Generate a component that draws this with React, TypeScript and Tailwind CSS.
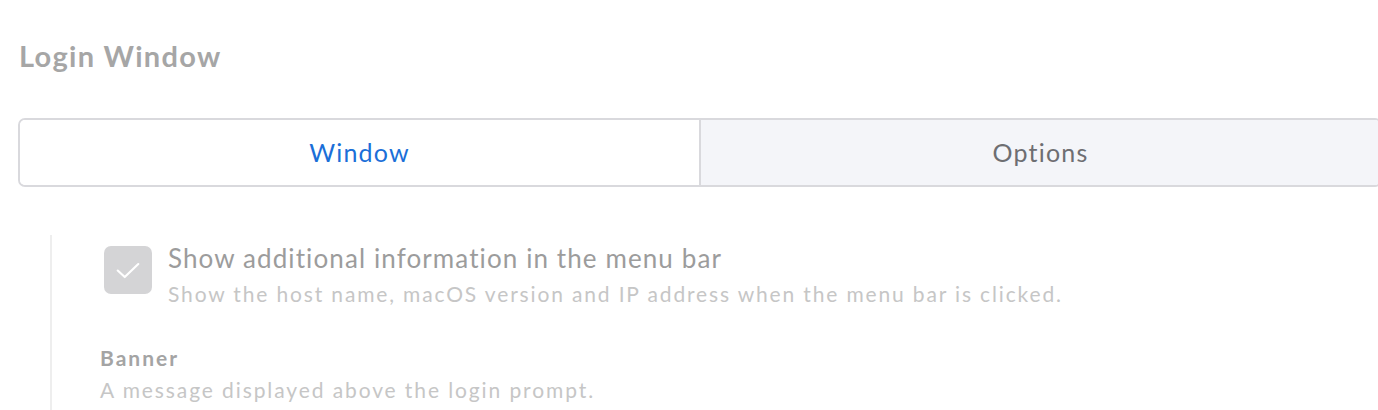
export default function App() {
  return (
    <div
      className="w-[1378px] h-[410px] overflow-hidden bg-white"
      style={{ fontFamily: "Lato, 'Noto Sans', sans-serif" }}
    >
      <div className="pl-[19px] pt-[38px]">
        {/* page title */}
        <h1 className="text-[29px] leading-[36px] font-bold tracking-[1.3px] text-[#a6a6a6]">Login Window</h1>

        {/* tabs */}
        <div className="mt-[44px] flex w-[1364px] h-[69px] border-2 border-[#d9d9dd] rounded-[7px] overflow-hidden -ml-px">
          <button className="w-[681px] bg-white text-[#1b6fd8] text-[25px] tracking-[1.2px] flex items-center justify-center border-r-2 border-[#d9d9dd]">
            Window
          </button>
          <button className="flex-1 bg-[#f4f5f9] text-[#6e6e72] text-[25px] tracking-[1.2px] flex items-center justify-center">
            Options
          </button>
        </div>

        {/* settings */}
        <div className="mt-[48px] ml-[31px] border-l-2 border-[#eeeeee] pt-[11px] pl-[52px] h-[200px]">
          <div className="flex items-start gap-[16px]">
            <div className="w-[48px] h-[48px] rounded-[7px] bg-[#d4d4d6] flex items-center justify-center shrink-0">
              <svg width="26" height="26" viewBox="0 0 24 24" fill="none">
                <path d="M2.5 12.5l6.5 6L21.5 6.5" stroke="white" strokeWidth="2" strokeLinecap="round" strokeLinejoin="round" />
              </svg>
            </div>
            <div className="-mt-[4px]">
              <div className="text-[26px] leading-[32px] tracking-[1.1px] text-[#9c9c9c]">Show additional information in the menu bar</div>
              <div className="text-[21px] leading-[30px] tracking-[1.85px] text-[#c6c6c6] mt-[5px]">
                Show the host name, macOS version and IP address when the menu bar is clicked.
              </div>
            </div>
          </div>

          <div className="mt-[35px] -ml-[4px]">
            <div className="text-[21px] leading-[28px] font-bold tracking-[2px] text-[#a4a4a4]">Banner</div>
            <div className="text-[21px] leading-[30px] tracking-[1.9px] text-[#c6c6c6] mt-[3px]">A message displayed above the login prompt.</div>
          </div>
        </div>
      </div>
    </div>
  );
}
